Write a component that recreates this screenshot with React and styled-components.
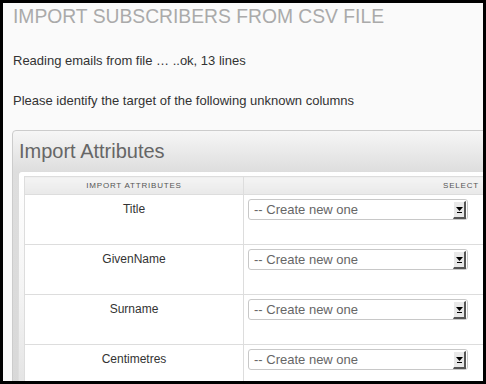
import React from "react";
import styled, { createGlobalStyle } from "styled-components";

const GlobalStyle = createGlobalStyle`
  html, body {
    margin: 0;
    padding: 0;
    background: #000;
  }
  body {
    font-family: "Liberation Sans", Arial, sans-serif;
  }
`;

const Frame = styled.div`
  margin: 3px 3px 0 3px;
  width: 480px;
  height: 378px;
  background: #fafafa;
  overflow: hidden;
  padding-left: 9px;
  box-sizing: border-box;
`;

const PageTitle = styled.h1`
  margin: 3px 0 0 1px;
  font-size: 19.3px;
  font-weight: normal;
  line-height: 22px;
  color: #aaa;
  white-space: nowrap;
`;

const Info = styled.p`
  margin: ${({ $top }) => $top}px 0 0 1px;
  font-size: 13px;
  line-height: 20px;
  color: #333;
  white-space: nowrap;
`;

const Panel = styled.div`
  margin-top: 19px;
  width: 700px;
  border: 1px solid #ccc;
  border-radius: 4px 4px 0 0;
  background: linear-gradient(#f6f6f6, #dedede 40px, #d8d8d8);
`;

const PanelHeader = styled.div`
  height: 40px;
  padding-left: 6px;
  font-size: 20px;
  line-height: 40px;
  color: #666;
`;

const PanelBody = styled.div`
  margin-left: 5px;
  border: 1px solid #ddd;
  border-right: none;
  border-radius: 4px 0 0 0;
  background: linear-gradient(#fff, #f4f4f4 120px, #e2e2e2);
  padding: 4px 0 0 5px;
`;

const Table = styled.table`
  border-collapse: collapse;
  width: 655px;
  background: #fff;
`;

const HeadCell = styled.th`
  height: 17px;
  padding: 0;
  border: 1px solid #ddd;
  background: linear-gradient(#f4f4f4, #e9e9e9);
  font-size: 8px;
  font-weight: normal;
  letter-spacing: 0.8px;
  color: #555;
  text-transform: uppercase;
  width: ${({ $w }) => ($w ? `${$w}px` : "auto")};
`;

const Cell = styled.td`
  height: 41px;
  padding: 4px;
  border: 1px solid #ddd;
  vertical-align: top;
  text-align: ${({ $center }) => ($center ? "center" : "left")};
  font-size: 12px;
  line-height: 20px;
  color: #333;
`;

const SelectBox = styled.div`
  width: 220px;
  height: 21px;
  box-sizing: border-box;
  border: 1px solid #c8c8c8;
  border-radius: 3px;
  background: #fff;
  display: flex;
  align-items: center;
  justify-content: space-between;
  padding: 0 0 0 5px;
  font-size: 13px;
  color: #666;
`;

const Arrow = styled.span`
  width: 13px;
  height: 18px;
  margin-right: 1px;
  box-sizing: border-box;
  background: #e8e8e8;
  border-top: 1px solid #fff;
  border-left: 1px solid #fff;
  border-right: 2px solid #555;
  border-bottom: 2px solid #555;
  display: flex;
  align-items: center;
  justify-content: center;
`;

const rows = ["Title", "GivenName", "Surname", "Centimetres"];

export default function App() {
  return (
    <>
      <GlobalStyle />
      <Frame>
        <PageTitle>IMPORT SUBSCRIBERS FROM CSV FILE</PageTitle>
        <Info $top={23}>Reading emails from file … ..ok, 13 lines</Info>
        <Info $top={20}>Please identify the target of the following unknown columns</Info>
        <Panel>
          <PanelHeader>Import Attributes</PanelHeader>
          <PanelBody>
            <Table>
              <thead>
                <tr>
                  <HeadCell $w={218}>Import Attributes</HeadCell>
                  <HeadCell>Select</HeadCell>
                </tr>
              </thead>
              <tbody>
                {rows.map((name) => (
                  <tr key={name}>
                    <Cell $center>{name}</Cell>
                    <Cell>
                      <SelectBox>
                        -- Create new one
                        <Arrow>
                          <svg width="7" height="7" viewBox="0 0 7 7">
                            <path d="M0 1h7L3.5 5z" fill="#000" />
                            <rect x="1" y="6" width="5" height="1" fill="#000" />
                          </svg>
                        </Arrow>
                      </SelectBox>
                    </Cell>
                  </tr>
                ))}
              </tbody>
            </Table>
          </PanelBody>
        </Panel>
      </Frame>
    </>
  );
}
